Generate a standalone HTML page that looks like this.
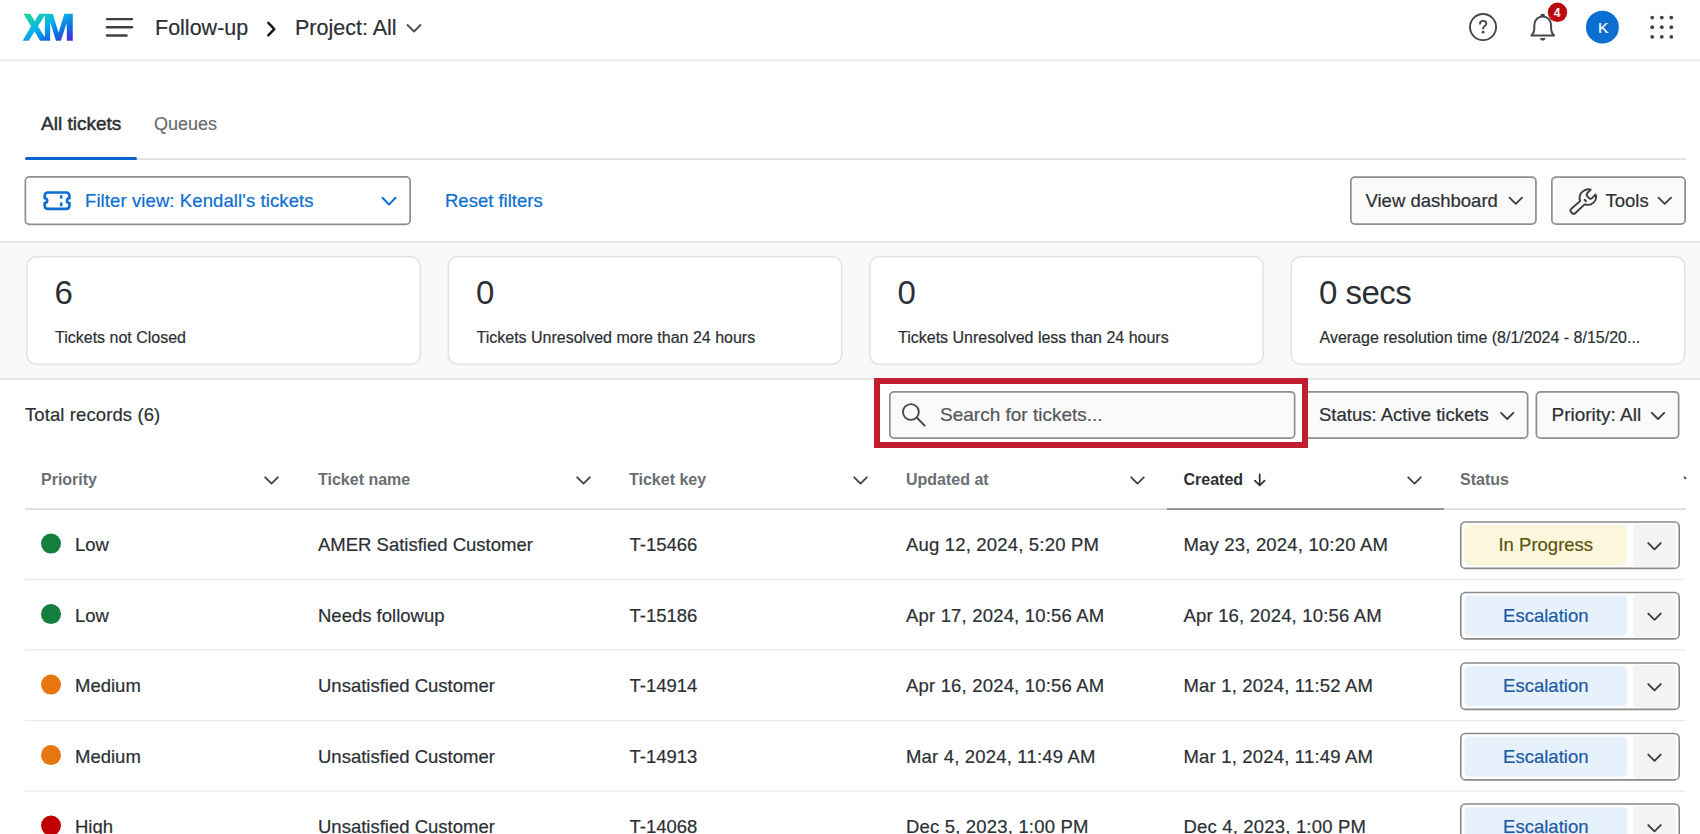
<!DOCTYPE html>
<html><head><meta charset="utf-8">
<style>
html,body{margin:0;padding:0;}
body{width:1700px;height:834px;overflow:hidden;background:#fff;position:relative;font-family:"Liberation Sans",sans-serif;color:#2c3034;}
.t{position:absolute;line-height:1;white-space:nowrap;-webkit-text-stroke:0.2px currentColor;}
#g{position:absolute;left:0;top:0;}
</style></head><body>
<svg id="g" width="1700" height="834" viewBox="0 0 1700 834">
<line x1="0" y1="60.4" x2="1700" y2="60.4" stroke="#e8e9ea" stroke-width="1.7"/>
<defs><linearGradient id="xmg" x1="0" y1="0" x2="1" y2="1">
<stop offset="0" stop-color="#22dc8a"/><stop offset="0.42" stop-color="#07b4ea"/><stop offset="0.75" stop-color="#1266e0"/><stop offset="1" stop-color="#5b1be0"/></linearGradient></defs>
<g transform="translate(18,10)"><path fill="url(#xmg)" fill-rule="evenodd" d="M5.46,3.78 L12.38,3.78 L16.58,11.33 L21.19,3.78 L34.83,3.78 L40.5,22.87 L46.37,3.78 L54.76,3.78 L54.76,30.84 L48.89,30.84 L48.68,13.01 L42.8,30.84 L37.98,30.84 L32.31,12.17 L32.1,30.84 L22.03,30.84 L16.58,21.4 L10.7,30.84 L4.62,30.84 L13.01,16.37 Z M26.86,5.25 L26.86,27.28 L19.93,16.37 Z"/></g>
<path d="M107,19.1 H132" fill="none" stroke="#3d4145" stroke-width="2.4" stroke-linecap="round" stroke-linejoin="round"/>
<path d="M107,27.3 H132" fill="none" stroke="#3d4145" stroke-width="2.4" stroke-linecap="round" stroke-linejoin="round"/>
<path d="M107,35.5 H126.5" fill="none" stroke="#3d4145" stroke-width="2.4" stroke-linecap="round" stroke-linejoin="round"/>
<path d="M268.3,22.8 L274.3,29.1 L268.3,35.4" fill="none" stroke="#141618" stroke-width="2.4" stroke-linecap="round" stroke-linejoin="round"/>
<path d="M407.5,25 L414,31.5 L420.5,25" fill="none" stroke="#4a4e52" stroke-width="1.8" stroke-linecap="round" stroke-linejoin="round"/>
<circle cx="1483.05" cy="27.1" r="13.05" fill="none" stroke="#45494d" stroke-width="1.9"/>
<path d="M1480,23.7 C1480,21.9 1481.4,20.9 1483.2,20.9 C1485,20.9 1486.3,22 1486.3,23.6 C1486.3,25.2 1485.2,25.8 1484.2,26.5 C1483.4,27.1 1483.1,27.6 1483.1,28.6" fill="none" stroke="#45494d" stroke-width="1.9" stroke-linecap="round" stroke-linejoin="round"/>
<circle cx="1483.1" cy="32.2" r="1.4" fill="#45494d"/>
<path d="M1542.7,16.4 C1547,16.4 1551.1,19.8 1551.1,25.2 L1551.1,29.2 C1551.1,31.4 1552.4,33.6 1554,35.6 L1531.5,35.6 C1533.1,33.6 1534.3,31.4 1534.3,29.2 L1534.3,25.2 C1534.3,19.8 1538.4,16.4 1542.7,16.4 Z" fill="none" stroke="#45494d" stroke-width="2.0" stroke-linecap="round" stroke-linejoin="round"/>
<ellipse cx="1542.7" cy="15.2" rx="2.3" ry="1.4" fill="#45494d"/>
<path d="M1540.1,38 A2.6,2.6 0 0 0 1545.3,38 Z" fill="#45494d"/>
<circle cx="1557.5" cy="12.3" r="9.7" fill="#bb0a0f"/>
<circle cx="1602.4" cy="27.2" r="16.4" fill="#0b6ed0"/>
<circle cx="1652.2" cy="17.6" r="1.9" fill="#3f4347"/>
<circle cx="1661.8" cy="17.6" r="1.9" fill="#3f4347"/>
<circle cx="1671.3" cy="17.6" r="1.9" fill="#3f4347"/>
<circle cx="1652.2" cy="27.2" r="1.9" fill="#3f4347"/>
<circle cx="1661.8" cy="27.2" r="1.9" fill="#3f4347"/>
<circle cx="1671.3" cy="27.2" r="1.9" fill="#3f4347"/>
<circle cx="1652.2" cy="36.8" r="1.9" fill="#3f4347"/>
<circle cx="1661.8" cy="36.8" r="1.9" fill="#3f4347"/>
<circle cx="1671.3" cy="36.8" r="1.9" fill="#3f4347"/>
<line x1="25" y1="159.1" x2="1686" y2="159.1" stroke="#e0e0e0" stroke-width="1.7"/>
<rect x="25.00" y="157.00" width="112.00" height="3.00" rx="1.50" fill="#0b63ce"/>
<rect x="25.35" y="176.85" width="384.80" height="47.50" rx="4.15" fill="#fff" stroke="#8e8e8e" stroke-width="1.7"/>
<path d="M47.7,192.5 H66.4 A3,3 0 0 1 69.4,195.5 V198.2 A2.5,2.4 0 0 0 69.4,203 V205.8 A3,3 0 0 1 66.4,208.8 H47.7 A3,3 0 0 1 44.7,205.8 V203 A2.5,2.4 0 0 0 44.7,198.2 V195.5 A3,3 0 0 1 47.7,192.5 Z" fill="none" stroke="#0b6ed0" stroke-width="2.7" stroke-linecap="round" stroke-linejoin="round"/>
<path d="M61.2,196.4 V197.5 M61.2,203.6 V205.1" fill="none" stroke="#0b6ed0" stroke-width="2.7" stroke-linecap="round" stroke-linejoin="round"/>
<path d="M382.5,197.8 L389,204.6 L395.5,197.8" fill="none" stroke="#0b6ed0" stroke-width="2.0" stroke-linecap="round" stroke-linejoin="round"/>
<rect x="1350.85" y="177.05" width="185.10" height="47.10" rx="4.15" fill="#fafafa" stroke="#8e8e8e" stroke-width="1.7"/>
<rect x="1551.85" y="177.05" width="133.30" height="47.10" rx="4.15" fill="#fafafa" stroke="#8e8e8e" stroke-width="1.7"/>
<path d="M1509.5,197.6 L1515.8,203.8 L1522,197.6" fill="none" stroke="#3a3e42" stroke-width="1.8" stroke-linecap="round" stroke-linejoin="round"/>
<path d="M1658.5,197.6 L1664.7,203.8 L1671,197.6" fill="none" stroke="#3a3e42" stroke-width="1.8" stroke-linecap="round" stroke-linejoin="round"/>
<path d="M1580.2,201.1 C1578.8,198 1579.5,193.5 1583,191.2 C1585.5,189.5 1588.5,189 1590.8,189.6 L1587.4,193 C1586.5,194 1586.5,195.5 1587.5,196.5 L1588.8,197.8 C1589.8,198.8 1591.3,198.8 1592.3,197.8 L1595.6,194.4 C1596.4,197 1595.8,200.5 1593.5,202.6 C1591.2,204.8 1587.8,205.3 1584.6,204.4 L1575.4,213 C1574.4,214 1573,214 1572,213 L1571.2,212.2 C1570.2,211.2 1570.2,209.8 1571.2,208.8 Z" fill="none" stroke="#3a3e42" stroke-width="1.9" stroke-linecap="round" stroke-linejoin="round"/>
<path d="M1584.6,199.8 L1586.1,201.2" fill="none" stroke="#3a3e42" stroke-width="1.9" stroke-linecap="round" stroke-linejoin="round"/>
<rect x="0.00" y="241.00" width="1700.00" height="139.00" rx="0.00" fill="#f9f9f9"/>
<line x1="0" y1="242" x2="1700" y2="242" stroke="#e6e6e6" stroke-width="2"/>
<line x1="0" y1="379" x2="1700" y2="379" stroke="#e6e6e6" stroke-width="2"/>
<rect x="26.80" y="256.80" width="393.40" height="107.40" rx="9.20" fill="#fff" stroke="#e3e3e3" stroke-width="1.6"/>
<rect x="448.30" y="256.80" width="393.40" height="107.40" rx="9.20" fill="#fff" stroke="#e3e3e3" stroke-width="1.6"/>
<rect x="869.80" y="256.80" width="393.40" height="107.40" rx="9.20" fill="#fff" stroke="#e3e3e3" stroke-width="1.6"/>
<rect x="1291.30" y="256.80" width="393.40" height="107.40" rx="9.20" fill="#fff" stroke="#e3e3e3" stroke-width="1.6"/>
<rect x="889.85" y="391.85" width="404.80" height="46.30" rx="4.15" fill="#fafafa" stroke="#8e8e8e" stroke-width="1.7"/>
<rect x="1303.85" y="391.85" width="223.80" height="46.30" rx="4.15" fill="#fafafa" stroke="#8e8e8e" stroke-width="1.7"/>
<rect x="1536.35" y="391.85" width="142.30" height="46.30" rx="4.15" fill="#fafafa" stroke="#8e8e8e" stroke-width="1.7"/>
<circle cx="910.9" cy="412" r="7.9" fill="none" stroke="#45494d" stroke-width="1.9"/>
<path d="M917,417.8 L924.6,425.6" fill="none" stroke="#45494d" stroke-width="2.0" stroke-linecap="round" stroke-linejoin="round"/>
<path d="M1501,412.8 L1507.2,419 L1513.4,412.8" fill="none" stroke="#3a3e42" stroke-width="1.8" stroke-linecap="round" stroke-linejoin="round"/>
<path d="M1651.8,412.8 L1658,419 L1664.2,412.8" fill="none" stroke="#3a3e42" stroke-width="1.8" stroke-linecap="round" stroke-linejoin="round"/>
<rect x="877.00" y="381.00" width="428.00" height="64.00" rx="0.00" fill="none" stroke="#c11f30" stroke-width="6"/>
<path d="M265.2,477.3 L271.5,483.6 L277.8,477.3" fill="none" stroke="#3f4347" stroke-width="1.8" stroke-linecap="round" stroke-linejoin="round"/>
<path d="M577.2,477.3 L583.5,483.6 L589.8,477.3" fill="none" stroke="#3f4347" stroke-width="1.8" stroke-linecap="round" stroke-linejoin="round"/>
<path d="M854.2,477.3 L860.5,483.6 L866.8,477.3" fill="none" stroke="#3f4347" stroke-width="1.8" stroke-linecap="round" stroke-linejoin="round"/>
<path d="M1131.2,477.3 L1137.5,483.6 L1143.8,477.3" fill="none" stroke="#3f4347" stroke-width="1.8" stroke-linecap="round" stroke-linejoin="round"/>
<path d="M1408.2,477.3 L1414.5,483.6 L1420.8,477.3" fill="none" stroke="#3f4347" stroke-width="1.8" stroke-linecap="round" stroke-linejoin="round"/>
<path d="M1684.6,477.3 L1685.6,478.3" fill="none" stroke="#3f4347" stroke-width="1.8" stroke-linecap="round" stroke-linejoin="round"/>
<path d="M1259.7,474.4 V485" fill="none" stroke="#2b2e31" stroke-width="1.7" stroke-linecap="round" stroke-linejoin="round"/>
<path d="M1254.8,480.6 L1259.7,485.4 L1264.6,480.6" fill="none" stroke="#2b2e31" stroke-width="1.7" stroke-linecap="round" stroke-linejoin="round"/>
<line x1="25" y1="509.1" x2="1686" y2="509.1" stroke="#dcdcdc" stroke-width="1.8"/>
<line x1="1167" y1="509.1" x2="1444" y2="509.1" stroke="#8a8d90" stroke-width="1.8"/>
<line x1="25" y1="579.5" x2="1686" y2="579.5" stroke="#ebebeb" stroke-width="1.6"/>
<circle cx="51" cy="543.60" r="10" fill="#137e3d"/>
<rect x="1460.80" y="522.00" width="218.40" height="46.40" rx="4.70" fill="#fff" stroke="#8a8a8a" stroke-width="1.6"/>
<rect x="1464.40" y="525.00" width="162.80" height="40.20" rx="4.50" fill="#fcf7dc"/>
<rect x="1633.00" y="524.00" width="43.00" height="42.70" rx="4.50" fill="#f3f3f3"/>
<path d="M1648.3,543.10 L1654.5,549.30 L1660.7,543.10" fill="none" stroke="#3a3e42" stroke-width="1.9" stroke-linecap="round" stroke-linejoin="round"/>
<line x1="25" y1="650.0" x2="1686" y2="650.0" stroke="#ebebeb" stroke-width="1.6"/>
<circle cx="51" cy="614.10" r="10" fill="#137e3d"/>
<rect x="1460.80" y="592.50" width="218.40" height="46.40" rx="4.70" fill="#fff" stroke="#8a8a8a" stroke-width="1.6"/>
<rect x="1464.40" y="595.50" width="162.80" height="40.20" rx="4.50" fill="#e7f1fc"/>
<rect x="1633.00" y="594.50" width="43.00" height="42.70" rx="4.50" fill="#f3f3f3"/>
<path d="M1648.3,613.60 L1654.5,619.80 L1660.7,613.60" fill="none" stroke="#3a3e42" stroke-width="1.9" stroke-linecap="round" stroke-linejoin="round"/>
<line x1="25" y1="720.5" x2="1686" y2="720.5" stroke="#ebebeb" stroke-width="1.6"/>
<circle cx="51" cy="684.60" r="10" fill="#e8760f"/>
<rect x="1460.80" y="663.00" width="218.40" height="46.40" rx="4.70" fill="#fff" stroke="#8a8a8a" stroke-width="1.6"/>
<rect x="1464.40" y="666.00" width="162.80" height="40.20" rx="4.50" fill="#e7f1fc"/>
<rect x="1633.00" y="665.00" width="43.00" height="42.70" rx="4.50" fill="#f3f3f3"/>
<path d="M1648.3,684.10 L1654.5,690.30 L1660.7,684.10" fill="none" stroke="#3a3e42" stroke-width="1.9" stroke-linecap="round" stroke-linejoin="round"/>
<line x1="25" y1="791.0" x2="1686" y2="791.0" stroke="#ebebeb" stroke-width="1.6"/>
<circle cx="51" cy="755.10" r="10" fill="#e8760f"/>
<rect x="1460.80" y="733.50" width="218.40" height="46.40" rx="4.70" fill="#fff" stroke="#8a8a8a" stroke-width="1.6"/>
<rect x="1464.40" y="736.50" width="162.80" height="40.20" rx="4.50" fill="#e7f1fc"/>
<rect x="1633.00" y="735.50" width="43.00" height="42.70" rx="4.50" fill="#f3f3f3"/>
<path d="M1648.3,754.60 L1654.5,760.80 L1660.7,754.60" fill="none" stroke="#3a3e42" stroke-width="1.9" stroke-linecap="round" stroke-linejoin="round"/>
<line x1="25" y1="861.5" x2="1686" y2="861.5" stroke="#ebebeb" stroke-width="1.6"/>
<circle cx="51" cy="825.60" r="10" fill="#c00000"/>
<rect x="1460.80" y="804.00" width="218.40" height="46.40" rx="4.70" fill="#fff" stroke="#8a8a8a" stroke-width="1.6"/>
<rect x="1464.40" y="807.00" width="162.80" height="40.20" rx="4.50" fill="#e7f1fc"/>
<rect x="1633.00" y="806.00" width="43.00" height="42.70" rx="4.50" fill="#f3f3f3"/>
<path d="M1648.3,825.10 L1654.5,831.30 L1660.7,825.10" fill="none" stroke="#3a3e42" stroke-width="1.9" stroke-linecap="round" stroke-linejoin="round"/>
</svg>
<div class="t" style="left:155px;top:18.00px;font-size:21.5px;color:#2c3034">Follow-up</div>
<div class="t" style="left:295px;top:18.00px;font-size:21.5px;color:#2c3034">Project: All</div>
<div class="t" style="left:1553.8px;top:7.00px;font-size:12px;color:#fff;font-weight:bold;-webkit-text-stroke:0">4</div>
<div class="t" style="left:1598px;top:20.00px;font-size:15.5px;color:#fff">K</div>
<div class="t" style="left:41px;top:114.00px;font-size:19px;color:#2c3034;-webkit-text-stroke:0.5px #2c3034">All tickets</div>
<div class="t" style="left:154px;top:115.00px;font-size:18px;color:#6b6e72">Queues</div>
<div class="t" style="left:85px;top:192.00px;font-size:18.5px;color:#0b6ed0;letter-spacing:0.1px">Filter view: Kendall's tickets</div>
<div class="t" style="left:445px;top:192.00px;font-size:18.5px;color:#0b6ed0">Reset filters</div>
<div class="t" style="left:1365.5px;top:192.00px;font-size:18.5px;color:#2c3034">View dashboard</div>
<div class="t" style="left:1605.5px;top:192.00px;font-size:18.5px;color:#2c3034">Tools</div>
<div class="t" style="left:54.5px;top:276.00px;font-size:33px;color:#2c3034;letter-spacing:-0.5px;-webkit-text-stroke:0">6</div>
<div class="t" style="left:55px;top:330.00px;font-size:16px;color:#2c3034">Tickets not Closed</div>
<div class="t" style="left:476.0px;top:276.00px;font-size:33px;color:#2c3034;letter-spacing:-0.5px;-webkit-text-stroke:0">0</div>
<div class="t" style="left:476.5px;top:330.00px;font-size:16px;color:#2c3034">Tickets Unresolved more than 24 hours</div>
<div class="t" style="left:897.5px;top:276.00px;font-size:33px;color:#2c3034;letter-spacing:-0.5px;-webkit-text-stroke:0">0</div>
<div class="t" style="left:898px;top:330.00px;font-size:16px;color:#2c3034">Tickets Unresolved less than 24 hours</div>
<div class="t" style="left:1319.0px;top:276.00px;font-size:33px;color:#2c3034;letter-spacing:-0.5px;-webkit-text-stroke:0">0 secs</div>
<div class="t" style="left:1319.5px;top:330.00px;font-size:16px;color:#2c3034">Average resolution time (8/1/2024 - 8/15/20...</div>
<div class="t" style="left:25px;top:406.00px;font-size:18.5px;color:#2c3034;letter-spacing:0.1px">Total records (6)</div>
<div class="t" style="left:940px;top:405.00px;font-size:19px;color:#53575b">Search for tickets...</div>
<div class="t" style="left:1319px;top:406.00px;font-size:18.5px;color:#2c3034">Status: Active tickets</div>
<div class="t" style="left:1551.5px;top:405.00px;font-size:19px;color:#2c3034">Priority: All</div>
<div class="t" style="left:41px;top:472.00px;font-size:16px;color:#6a6e72;font-weight:bold;-webkit-text-stroke:0">Priority</div>
<div class="t" style="left:318px;top:472.00px;font-size:16px;color:#6a6e72;font-weight:bold;-webkit-text-stroke:0">Ticket name</div>
<div class="t" style="left:629px;top:472.00px;font-size:16px;color:#6a6e72;font-weight:bold;-webkit-text-stroke:0">Ticket key</div>
<div class="t" style="left:906px;top:472.00px;font-size:16px;color:#6a6e72;font-weight:bold;-webkit-text-stroke:0">Updated at</div>
<div class="t" style="left:1460px;top:472.00px;font-size:16px;color:#6a6e72;font-weight:bold;-webkit-text-stroke:0">Status</div>
<div class="t" style="left:1183.5px;top:472.00px;font-size:16px;color:#2c3034;font-weight:bold;-webkit-text-stroke:0">Created</div>
<div class="t" style="left:75px;top:536.00px;font-size:18.5px;color:#2c3034">Low</div>
<div class="t" style="left:318px;top:536.00px;font-size:18.5px;color:#2c3034">AMER Satisfied Customer</div>
<div class="t" style="left:629.5px;top:536.00px;font-size:18.5px;color:#2c3034">T-15466</div>
<div class="t" style="left:906px;top:536.00px;font-size:18.5px;color:#2c3034;letter-spacing:0.18px">Aug 12, 2024, 5:20 PM</div>
<div class="t" style="left:1183.5px;top:536.00px;font-size:18.5px;color:#2c3034;letter-spacing:0.18px">May 23, 2024, 10:20 AM</div>
<div class="t" style="left:1464.4px;width:162.8px;text-align:center;top:536.00px;font-size:18.5px;color:#5e5410">In Progress</div>
<div class="t" style="left:75px;top:607.00px;font-size:18.5px;color:#2c3034">Low</div>
<div class="t" style="left:318px;top:607.00px;font-size:18.5px;color:#2c3034">Needs followup</div>
<div class="t" style="left:629.5px;top:607.00px;font-size:18.5px;color:#2c3034">T-15186</div>
<div class="t" style="left:906px;top:607.00px;font-size:18.5px;color:#2c3034;letter-spacing:0.18px">Apr 17, 2024, 10:56 AM</div>
<div class="t" style="left:1183.5px;top:607.00px;font-size:18.5px;color:#2c3034;letter-spacing:0.18px">Apr 16, 2024, 10:56 AM</div>
<div class="t" style="left:1464.4px;width:162.8px;text-align:center;top:607.00px;font-size:18.5px;color:#1c5ba3">Escalation</div>
<div class="t" style="left:75px;top:677.00px;font-size:18.5px;color:#2c3034">Medium</div>
<div class="t" style="left:318px;top:677.00px;font-size:18.5px;color:#2c3034">Unsatisfied Customer</div>
<div class="t" style="left:629.5px;top:677.00px;font-size:18.5px;color:#2c3034">T-14914</div>
<div class="t" style="left:906px;top:677.00px;font-size:18.5px;color:#2c3034;letter-spacing:0.18px">Apr 16, 2024, 10:56 AM</div>
<div class="t" style="left:1183.5px;top:677.00px;font-size:18.5px;color:#2c3034;letter-spacing:0.18px">Mar 1, 2024, 11:52 AM</div>
<div class="t" style="left:1464.4px;width:162.8px;text-align:center;top:677.00px;font-size:18.5px;color:#1c5ba3">Escalation</div>
<div class="t" style="left:75px;top:748.00px;font-size:18.5px;color:#2c3034">Medium</div>
<div class="t" style="left:318px;top:748.00px;font-size:18.5px;color:#2c3034">Unsatisfied Customer</div>
<div class="t" style="left:629.5px;top:748.00px;font-size:18.5px;color:#2c3034">T-14913</div>
<div class="t" style="left:906px;top:748.00px;font-size:18.5px;color:#2c3034;letter-spacing:0.18px">Mar 4, 2024, 11:49 AM</div>
<div class="t" style="left:1183.5px;top:748.00px;font-size:18.5px;color:#2c3034;letter-spacing:0.18px">Mar 1, 2024, 11:49 AM</div>
<div class="t" style="left:1464.4px;width:162.8px;text-align:center;top:748.00px;font-size:18.5px;color:#1c5ba3">Escalation</div>
<div class="t" style="left:75px;top:818.00px;font-size:18.5px;color:#2c3034">High</div>
<div class="t" style="left:318px;top:818.00px;font-size:18.5px;color:#2c3034">Unsatisfied Customer</div>
<div class="t" style="left:629.5px;top:818.00px;font-size:18.5px;color:#2c3034">T-14068</div>
<div class="t" style="left:906px;top:818.00px;font-size:18.5px;color:#2c3034;letter-spacing:0.18px">Dec 5, 2023, 1:00 PM</div>
<div class="t" style="left:1183.5px;top:818.00px;font-size:18.5px;color:#2c3034;letter-spacing:0.18px">Dec 4, 2023, 1:00 PM</div>
<div class="t" style="left:1464.4px;width:162.8px;text-align:center;top:818.00px;font-size:18.5px;color:#1c5ba3">Escalation</div>
</body></html>
